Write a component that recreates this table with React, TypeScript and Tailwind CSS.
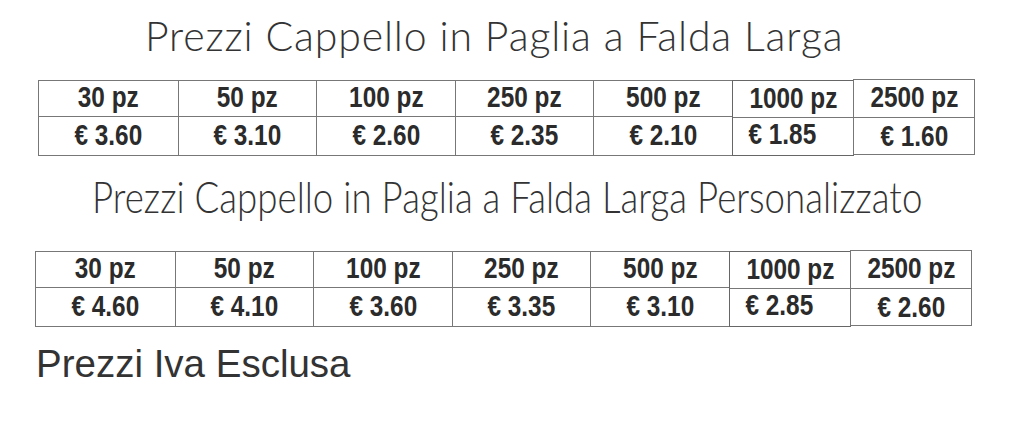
const rows1 = [
  ["30 pz", "€ 3.60"],
  ["50 pz", "€ 3.10"],
  ["100 pz", "€ 2.60"],
  ["250 pz", "€ 2.35"],
  ["500 pz", "€ 2.10"],
];

const rows2 = [
  ["30 pz", "€ 4.60"],
  ["50 pz", "€ 4.10"],
  ["100 pz", "€ 3.60"],
  ["250 pz", "€ 3.35"],
  ["500 pz", "€ 3.10"],
];

const cellFont = "font-['Liberation_Sans',Arial,sans-serif] font-bold text-[29px] text-[#2b2b2b] leading-none";

// narrow look: Arial Narrow isn't there, so squeeze the bold face
function Narrow({ children }: { children: string }) {
  return <span className="inline-block scale-x-[0.84] whitespace-nowrap">{children}</span>;
}

function PriceTable({
  cols,
  big,
  biggest,
}: {
  cols: string[][];
  big: string[];
  biggest: string[];
}) {
  return (
    <div className={`flex ${cellFont}`}>
      <div className="flex border border-[#777]">
        {cols.map(([qty, price], i) => (
          <div
            key={qty}
            className={`flex w-[138.6px] flex-col ${i > 0 ? "border-l border-[#777]" : ""}`}
          >
            <div className="flex h-[36px] items-center justify-center border-b border-[#777] pb-[2px]">
              <Narrow>{qty}</Narrow>
            </div>
            <div className="flex h-[36px] items-center justify-center">
              <Narrow>{price}</Narrow>
            </div>
          </div>
        ))}
      </div>
      {/* 1000 pz box runs a pixel lower than the rest */}
      <div className="-ml-[1px] flex h-[76px] w-[122px] flex-col border border-[#666]">
        <div className="flex h-[37px] items-center justify-center border-b border-[#777] pb-[2px]">
          <Narrow>{big[0]}</Narrow>
        </div>
        <div className="flex h-[37px] items-center pb-[5px] pl-[9px]">
          <Narrow>{big[1]}</Narrow>
        </div>
      </div>
      <div className="-mt-[1px] -ml-[1px] flex h-[76px] w-[122px] flex-col border border-[#777]">
        <div className="flex h-[38px] items-center justify-center border-b border-[#777] pb-[2px]">
          <Narrow>{biggest[0]}</Narrow>
        </div>
        <div className="flex h-[36px] items-center justify-center">
          <Narrow>{biggest[1]}</Narrow>
        </div>
      </div>
    </div>
  );
}

export default function App() {
  return (
    <div className="h-[445px] w-[1025px] overflow-hidden bg-white">
      <div className="pl-[145px] pt-[10px]">
        <h1 className="font-['Lato',sans-serif] text-[41px] font-light leading-[52px] tracking-[0.85px] text-[#333] whitespace-nowrap">
          Prezzi Cappello in Paglia a Falda Larga
        </h1>
      </div>
      <div className="pl-[38px] pt-[18px]">
        <PriceTable cols={rows1} big={["1000 pz", "€ 1.85"]} biggest={["2500 pz", "€ 1.60"]} />
      </div>
      <div className="pl-[92px] pt-[16px]">
        <h2 className="inline-block origin-left scale-x-[0.853] font-['Lato',sans-serif] text-[43px] font-light leading-[50px] text-[#333] whitespace-nowrap">
          Prezzi Cappello in Paglia a Falda Larga Personalizzato
        </h2>
      </div>
      <div className="pl-[35px] pt-[29px]">
        <PriceTable cols={rows2} big={["1000 pz", "€ 2.85"]} biggest={["2500 pz", "€ 2.60"]} />
      </div>
      <p className="pl-[36px] pt-[18px] font-['Liberation_Sans',Arial,sans-serif] text-[38.5px] leading-none text-[#333]">
        Prezzi Iva Esclusa
      </p>
    </div>
  );
}
